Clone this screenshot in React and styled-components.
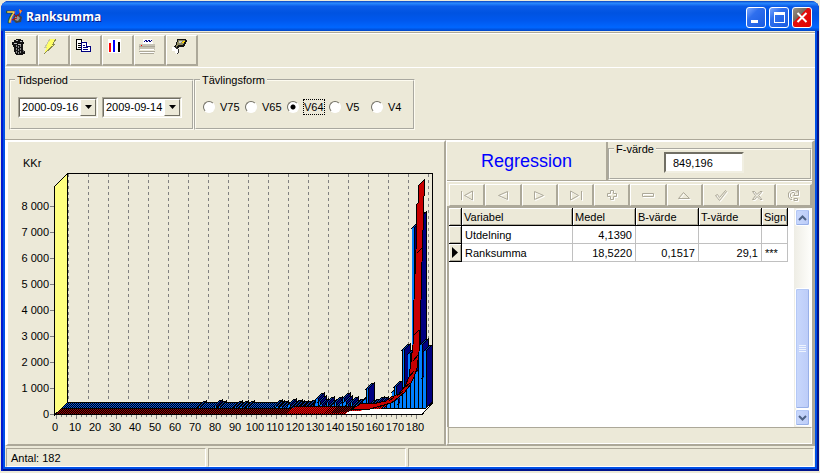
/* eslint-disable react/prop-types */
import { useState } from "react";
import styled, { createGlobalStyle, css } from "styled-components";

const face = "#ece9d8";
const shade = "#aca899";

const GlobalStyle = createGlobalStyle`
  *, *::before, *::after {
    box-sizing: border-box;
  }

  body {
    margin: 0;
    background: ${face};
    color: #000;
    font-family: "Liberation Sans", Arial, sans-serif;
    font-size: 11px;
    line-height: 14px;
  }

  button, input, select {
    font: inherit;
    color: inherit;
    margin: 0;
  }
`;

const raised = css`
  border: 1px solid;
  border-color: #fff ${shade} ${shade} #fff;
`;

const sunken = css`
  border: 1px solid;
  border-color: ${shade} #fff #fff ${shade};
`;

const Window = styled.div`
  display: flow-root;
`;

const Frame = styled.div`
  min-height: calc(100vh - 3px);
  margin: 1px 1px 2px;
  padding: 0 4px 4px;
  display: flex;
  flex-direction: column;
  border-radius: 8px 8px 0 0;
  background: #0050e6;
  box-shadow: inset 2px 0 0 #0019cf, inset -2px -2px 0 #00138c;
`;

const TitleBar = styled.header`
  height: 30px;
  margin: 0 -4px;
  padding: 2px 7px 0 5px;
  display: flex;
  align-items: center;
  gap: 3px;
  border-radius: 8px 8px 0 0;
  background: linear-gradient(
    180deg,
    #0842c0 0%,
    #2a8bff 7%,
    #0a5be8 18%,
    #0053e1 40%,
    #0058ee 65%,
    #0066ff 88%,
    #0045c8 100%
  );
`;

const Title = styled.h1`
  flex: 1;
  margin: 0;
  color: #fff;
  font-family: "Open Sans", "Noto Sans", sans-serif;
  font-size: 12px;
  line-height: 20px;
  font-weight: 700;
  text-shadow: 1px 1px 0 #0a1883;
`;

const CaptionButton = styled.button`
  width: 20px;
  height: 21px;
  padding: 0;
  border: 1px solid #fff;
  border-radius: 3px;
  background: ${({ $close }) =>
    $close
      ? "linear-gradient(135deg, #9a9488 0%, #77685c 38%, #e01010 40%, #e40000 100%)"
      : "linear-gradient(135deg, #7ba7ff 0%, #2f6fee 35%, #1a5be0 100%)"};

  svg {
    display: block;
  }
`;

const Client = styled.div`
  flex: 1;
  display: flex;
  flex-direction: column;
  background: ${face};
`;

const Toolbar = styled.div`
  height: 37px;
  padding: 3px 1px 0;
  display: flex;
  border-bottom: 1px solid #fff;
  box-shadow: inset 0 1px 0 ${face}, inset 0 2px 0 ${shade}, inset 0 3px 0 #fff;
`;

const ToolButton = styled.button`
  ${raised}
  width: 32px;
  height: 31px;
  margin-top: 1px;
  padding: 3px 4px;
  display: flex;
  align-items: flex-start;
  border-right-width: 2px;
  border-bottom-width: 2px;
  background: ${face};
`;

const Filters = styled.form`
  height: 72px;
  padding: 5px 4px 0;
  display: flex;
  align-items: flex-start;
  border-bottom: 1px solid ${shade};
`;

const Group = styled.fieldset`
  min-width: 0;
  width: ${({ $width }) => $width}px;
  height: 57px;
  margin: 0;
  padding: 0;
  border: 2px groove #fdfbf0;
`;

const Legend = styled.legend`
  margin-left: 4px;
  padding: 0 2px;
`;

const GroupRow = styled.div`
  height: 40px;
  padding-left: 7px;
  display: flex;
  align-items: center;
`;

const DateBox = styled.div`
  position: relative;
  width: 80px;
  height: 21px;
  margin-right: 4px;
  border: 1px solid;
  border-color: ${shade} #fff #fff ${shade};
`;

const DateSelect = styled.select`
  width: 100%;
  height: 100%;
  padding: 0 0 0 2px;
  appearance: none;
  border: 1px solid;
  border-color: #716f64 #f1efe2 #f1efe2 #716f64;
  border-radius: 0;
  background: #fff;
`;

const DropArrow = styled.span`
  ${raised}
  position: absolute;
  top: 1px;
  right: 1px;
  bottom: 1px;
  width: 16px;
  display: flex;
  align-items: center;
  justify-content: center;
  border-color: #fff #716f64 #716f64 #fff;
  background: ${face};
  pointer-events: none;
`;

const RadioLabel = styled.label`
  width: 42px;
  display: flex;
  align-items: center;
  gap: 5px;
  white-space: nowrap;
`;

const Radio = styled.input`
  flex: none;
  width: 12px;
  height: 12px;
  appearance: none;
  border: 1px solid;
  border-color: #716f64 #fff #fff #716f64;
  border-radius: 50%;
  background: #fff;
  outline: none;

  &:checked {
    background: radial-gradient(circle, #000 0 2px, #fff 3px);
  }
`;

const RadioText = styled.span`
  outline: ${({ $focused }) => ($focused ? "1px dotted #000" : "none")};
`;

const Main = styled.main`
  flex: 1;
  display: grid;
  grid-template-columns: 441fr 369fr;
`;

const ChartPanel = styled.section`
  min-width: 0;
  border: solid;
  border-width: 2px 2px 2px 3px;
  border-color: #fff ${shade} ${shade} #fff;

  svg {
    display: block;
    width: 100%;
  }
`;

const ResultPanel = styled.section`
  min-width: 0;
  display: flex;
  flex-direction: column;
  border: solid;
  border-width: 2px 3px 2px 1px;
  border-color: #fff ${shade} ${shade} #fff;
`;

const ResultHead = styled.div`
  height: 39px;
  display: flex;
  border-bottom: 1px solid ${shade};
`;

const RegressionButton = styled.button`
  flex: none;
  width: 161px;
  padding: 0;
  border: 0;
  border-right: 2px solid ${shade};
  background: ${face};
  color: #0000ff;
  font-size: 18px;
  line-height: 22px;
`;

const ValueGroup = styled(Group)`
  flex: 1;
  height: 38px;
`;

const ValueInput = styled.input`
  display: block;
  width: 80px;
  height: 21px;
  margin: -4px 0 0 54px;
  padding: 0 7px;
  border: 2px solid;
  border-color: #716f64 #f1efe2 #f1efe2 #716f64;
  border-radius: 0;
  background: #fff;
`;

const Navigator = styled.div`
  height: 25px;
  padding: 2px 0 0 2px;
  display: flex;
  border-top: 1px solid #fff;
`;

const NavButton = styled.button`
  ${raised}
  flex: 1;
  min-width: 0;
  padding: 0;
  display: flex;
  align-items: center;
  justify-content: center;
  border-right-width: 2px;
  background: ${face};

  svg {
    fill: none;
    stroke: ${shade};
    filter: drop-shadow(1px 1px 0 #fff);
  }
`;

const GridPane = styled.div`
  flex: 1;
  display: flex;
  justify-content: space-between;
  border: solid ${shade};
  border-width: 2px 0 0 2px;
  background: #fff;
`;

const Grid = styled.table`
  width: 339px;
  height: 54px;
  table-layout: fixed;
  border-collapse: separate;
  border-spacing: 0;
`;

const HeadCell = styled.th`
  width: ${({ $width }) => $width}px;
  height: 18px;
  padding: 1px 0 0 2px;
  overflow: hidden;
  border: solid #000;
  border-width: 0 1px 1px 0;
  background: ${face};
  box-shadow: inset 1px 1px 0 #fff, inset -1px -1px 0 ${shade};
  font-weight: 400;
  text-align: left;
`;

const Cell = styled.td`
  height: 18px;
  padding: 1px 3px 0;
  border: solid #c0c0c0;
  border-width: 0 1px 1px 0;
  text-align: ${({ $right }) => ($right ? "right" : "left")};
`;

const Marker = styled.th`
  height: 18px;
  padding: 0 0 0 3px;
  border: solid #000;
  border-width: 0 1px 1px 0;
  background: ${face};
  box-shadow: inset 1px 1px 0 #fff, inset -1px -1px 0 ${shade};

  svg {
    display: block;
  }
`;

const ScrollBar = styled.div`
  width: 18px;
  padding: 1px;
  display: flex;
  flex-direction: column;
  background: linear-gradient(90deg, #eeede5, #fefefb);
  border-right: 1px solid #fff;
`;

const scrollPart = css`
  border: 1px solid #fff;
  border-radius: 2px;
  background: linear-gradient(90deg, #c9d8fc, #bcccf8);
  box-shadow: inset -1px -1px 0 #98b0e8, inset 1px 1px 0 #b4c8f6;
`;

const ScrollButton = styled.button`
  ${scrollPart}
  height: 17px;
  padding: 0;
  display: flex;
  align-items: center;
  justify-content: center;
`;

const Track = styled.div`
  flex: 1;
  display: flex;
  flex-direction: column;
  justify-content: flex-end;
`;

const Thumb = styled.div`
  ${scrollPart}
  height: 66%;
  display: flex;
  align-items: center;
  justify-content: center;
`;

const ResultFooter = styled.div`
  ${sunken}
  height: 17px;
  margin-left: 1px;
`;

const StatusBar = styled.footer`
  height: 21px;
  padding: 2px 1px 0;
  display: flex;
  gap: 2px;
`;

const StatusCell = styled.div`
  ${sunken}
  flex: ${({ $width }) => ($width ? `0 0 ${$width}px` : "1")};
  padding: 2px 4px 0;
`;

/* ---------- toolbar drawings ---------- */

const toolIcons = {
  Rensa: (
    <>
      <path d="M3 1h2V0h5v1h2v2h1v2h-1v6l2 2v2h-2v1H5v-1H4v-2H3V8H2V6H1V3h2z" fill="#111" />
      <path d="M5 1h2v1H5zM9 2h2v1H9zM3 4h3v1H3zM7 5h3v1H7z" fill="#bbb" />
      <path d="M5.500 6v8M7.500 7v8M9.500 6v8" stroke="#8c8c8c" strokeDasharray="2 1" />
      <path d="M12 11h1v2h-1z" fill="#666" />
    </>
  ),
  Kör: (
    <>
      <path d="M7 0h6l-3 5h2L1 15l3-7H2z" fill="#ffff66" />
      <path d="M13 0l-3 5h2L1 15" fill="none" stroke="#8a8a50" />
      <path d="M7 0L2 8h2" fill="none" stroke="#c8c8a0" />
    </>
  ),
  Kopiera: (
    <g fill="#fff" stroke="#000">
      <path d="M1.500 .5h5l3 3v7h-8z" />
      <path d="M6.500 .5v3h3M3 4.500h3M3 6.500h4M3 8.500h4" />
      <g stroke="#000080">
        <path d="M6.500 3.500h5l4 4v5h-9z" />
        <path d="M11.500 3.500v4h4M8 6.500h2M8 8.500h5M8 10.500h5" />
      </g>
    </g>
  ),
  Diagram: (
    <>
      <path d="M1 0h13v14H1z" fill="#fff" />
      <path d="M2 4h2v9H2z" fill="#ff0000" />
      <path d="M6 1h2v12H6z" fill="#0000ff" />
      <path d="M11 3h2v10h-2z" fill="#000" />
    </>
  ),
  "Skriv ut": (
    <>
      <path d="M4 0h9l1 5H4z" fill="#fff" />
      <path d="M5 2.500l2-1 1 1 2-1 1 1 2-1" fill="none" stroke="#000080" />
      <path d="M0 5h16v6H0z" fill="#c6c3b4" />
      <path d="M0 7.500h16M0 12.500h16M1 14.500h14" stroke={shade} />
      <path d="M1 10.500h14M1 13.500h14" stroke="#fff" />
      <path d="M2 6h1v1H2z" fill="#f00" />
    </>
  ),
  Sök: (
    <>
      <path d="M6 0h9l1 2-3 6H9l-4 3H2L1 9l4-3z" fill="#111" />
      <path d="M7 1h7l-2 5H8L5 8z" fill="#8d8a60" />
      <path d="M8 2h3l-1 2H8z" fill="#ccc" />
      <path d="M12 2h2l-1 2h-2z" fill="#ffd800" />
      <path d="M1 8h3l3 2 1 3-2 2H5l-1-3H1z" fill="#fff" />
      <path d="M4 8l3 2 1 3-2 2" fill="none" stroke="#333" />
    </>
  ),
};

/* ---------- record navigator drawings ---------- */

const navIcons = {
  Första: "M1.500 2v9M12.500 2v9l-8-4.500z",
  Föregående: "M11.500 2.500v8l-9-4z",
  Nästa: "M2.500 2.500v8l9-4z",
  Sista: "M1.500 2v9l8-4.500zM12.500 2v9",
  "Lägg till": "M5.500 1.500h3v3h3v3h-3v3h-3v-3h-3v-3h3z",
  "Ta bort": "M1.500 4.500h11v3h-11z",
  Redigera: "M1.500 9.500l5-6 6 6z",
  Spara: "M1.500 6.500l2-1 2 3 6-7 1 1-7 9z",
  Avbryt: "M2.500 2.500h2l2.500 3 3-3h2l-3.500 4 3.500 4h-2l-3-3-2.500 3h-2l3-4z",
  Uppdatera: "M6 10.500H4.500L2.500 8V4L5 1.500h4l2 2V1.500h1.500v5h-5L9 5 8 3.500H6L4.500 5v2.500L6 9M8 9.500h3.500v2H8z",
};

/* ---------- chart ---------- */

const BAR = 2;
const DEPTH = 6;
const BAR_LEFT = 60;
const BAR_BASE = 408;

// bar number -> height, all others are flat
const heights = {
  69: 1, 77: 2, 79: 1, 87: 1, 90: 1, 93: 1,
  107: 2, 108: 1, 110: 1, 114: 3, 115: 1, 117: 2, 118: 1, 120: 1, 122: 1, 124: 2, 125: 1,
  127: 4, 128: 9, 129: 6, 130: 3, 133: 5, 134: 2, 136: 3, 137: 5, 138: 2, 140: 4, 141: 9, 142: 6, 143: 3,
  145: 5, 146: 2, 148: 3, 149: 1, 150: 3, 151: 7, 152: 8, 153: 19, 154: 2, 156: 3, 157: 2, 158: 5, 160: 5,
  161: 2, 163: 5, 164: 8, 165: 10, 166: 16, 167: 21, 168: 8, 169: 4, 170: 16, 171: 58,
  172: 19, 173: 24, 174: 54, 175: 28, 176: 180, 177: 44, 178: 36, 179: 190, 180: 63, 181: 30, 182: 57,
};

const bars = Array.from({ length: 183 }, (_, i) => ({
  x: BAR_LEFT + i * BAR,
  h: heights[i] || 0,
})).filter((bar) => bar.h > 0);

const ribbon =
  "M418 186L424 180V196L423 197V230L422 262L421 300L420 330L419 352L417 368L414 377L410 385L405 392L398 398L391 403L384 405L370 409H352L360 404L377 403L386 401L391 397L399 394L405 386L409 377L411 362L413 345L414 300L416 250L417 204L418 203Z";

function Bar({ x, h }) {
  const top = BAR_BASE - h;
  const right = x + BAR;
  return (
    <g>
      <path
        d={`M${right} ${BAR_BASE}V${top}l${DEPTH} ${-DEPTH}V${BAR_BASE - DEPTH}z`}
        fill="#000080"
        stroke="#000"
      />
      <path
        d={`M${x} ${top}l${DEPTH} ${-DEPTH}h${BAR}l${-DEPTH} ${DEPTH}z`}
        fill="#0040c0"
        stroke="#000"
      />
      <path d={`M${x} ${top}h${BAR}V${BAR_BASE}h${-BAR}z`} fill="#0080ff" />
      {x % 4 === 2 && <path d={`M${x} ${top}h1V${BAR_BASE}h-1z`} />}
    </g>
  );
}

function Chart() {
  const ticks = Array.from({ length: 19 }, (_, i) => i);
  return (
    <svg viewBox="8 142 436 302" role="img" aria-label="KKr per ranksumma" fontSize="11">
      <defs>
        <pattern id="blueMesh" width="2" height="2" patternUnits="userSpaceOnUse">
          <path d="M0 0h2v2H0z" fill="#000" />
          <path d="M0 0h1v1H0zM1 1h1v1H1z" fill="#0050e0" />
        </pattern>
        <pattern id="redMesh" width="2" height="2" patternUnits="userSpaceOnUse">
          <path d="M0 0h2v2H0z" fill="#000" />
          <path d="M0 0h1v1H0zM1 1h1v1H1z" fill="#f00" />
        </pattern>
      </defs>

      <text x="23" y="167">KKr</text>
      {ticks.slice(0, 9).map((n) => (
        <text key={n} x="49" y={418 - n * 26} textAnchor="end">
          {n ? `${n} 000` : "0"}
        </text>
      ))}
      {ticks.map((n) => (
        <text key={n} x={55 + n * 20} y="431" textAnchor="middle">
          {n * 10}
        </text>
      ))}

      <g shapeRendering="crispEdges">
        {ticks.map((n) => (
          <path
            key={n}
            d={`M${68.5 + n * 20} 174V403`}
            stroke="#808080"
            strokeDasharray="3 3"
          />
        ))}
        {ticks.slice(0, 9).map((n) => (
          <path key={n} d={`M50 ${414.5 - n * 26}h4`} stroke="#808080" />
        ))}
        {Array.from({ length: 73 }, (_, i) => (
          <path key={i} d={`M${56.5 + i * 5} 415v${i % 4 ? 2 : 4}`} stroke="#808080" />
        ))}

        <path d="M54.500 186.500L67.500 173.500V403L55 414.500z" fill="#ffff80" stroke="#000" />
        <path d="M67 173.500H432.500V403.500L421 414.500" fill="none" stroke="#000" />

        <path d="M57 414L67 403H432L421 414z" fill="#fff" />
        <path d="M61 408L67 402H431L425 408z" fill="url(#blueMesh)" />
        <path d="M67 402.500H400M62 408.500H426" stroke="#000" />
        {bars.map((bar) => (
          <Bar key={bar.x} {...bar} />
        ))}

        <path d="M56 414L61 409H288L296 407H372L384 403L388 405L380 409H366L350 414z" fill="url(#redMesh)" />
        <path d="M56 414L61 409H292L286 414z" fill="#000" fillOpacity="0.4" />
        <path d="M61 408.500H290L294 406.500H358" fill="none" stroke="#000" />
        <path d="M288 413L294 407H330L324 413zM352 411L358 406H384L376 410z" fill="#d00000" fillOpacity="0.45" />
        <path d="M330 413L336 407H356L350 412z" fill="#000" fillOpacity="0.5" />
        <path d="M345 414L350 411H361L364 409H427L421 414z" fill="#fff" />
        <path d="M55 414.500H422L432 403.500" fill="none" stroke="#000" />
        <path d={ribbon} fill="#c80000" stroke="#000" />
        <path d="M417 253l5-5M414 335l5-5M413 361l5-6M409 377l5-6M404 388l6-5M397 396l6-5M389 401l5-4" stroke="#000" />
      </g>
    </svg>
  );
}

const columns = [
  { title: "Variabel", width: 111 },
  { title: "Medel", width: 63 },
  { title: "B-värde", width: 63 },
  { title: "T-värde", width: 63 },
  { title: "Sign", width: 26 },
];

const rows = [
  ["Utdelning", "4,1390", "", "", ""],
  ["Ranksumma", "18,5220", "0,1517", "29,1", "***"],
];

function DatePick({ label, value }) {
  return (
    <DateBox>
      <DateSelect aria-label={label} defaultValue={value}>
        <option>{value}</option>
      </DateSelect>
      <DropArrow>
        <svg width="7" height="4">
          <path d="M0 0h7L3.500 4z" />
        </svg>
      </DropArrow>
    </DateBox>
  );
}

function Chevron({ down }) {
  return (
    <svg width="9" height="6" fill="none" stroke="#4d6185" strokeWidth="2">
      <path d={down ? "M1 1l3.500 3.500L8 1" : "M1 5l3.500-3.500L8 5"} />
    </svg>
  );
}

function App() {
  const [form, setForm] = useState("V64");

  return (
    <Window>
      <GlobalStyle />
      <Frame>
        <TitleBar>
          <svg width="17" height="18">
            <path d="M8 8l4-2 4 3-1 5-5 1-3-3z" fill="#444" />
            <path d="M9 9l3-1 2 2-2 3-3-1z" fill="#999" />
            <path d="M8 6l3 3M12 8l4-6M6 12l5-2" stroke="#c00000" strokeWidth="1" />
            <path d="M13 1l3 2-2 3z" fill="#ff9a2e" />
            <text x="0" y="15" fontSize="17" fontWeight="700" fill="#ffe060" stroke="#402000" strokeWidth="0.5">
              7
            </text>
          </svg>
          <Title>Ranksumma</Title>
          <CaptionButton aria-label="Minimera">
            <svg width="18" height="19">
              <path d="M4 12h7v3H4z" fill="#fff" />
            </svg>
          </CaptionButton>
          <CaptionButton aria-label="Maximera">
            <svg width="18" height="19">
              <path d="M4 4h11v11H4zM5 7v7h9V7z" fill="#fff" fillRule="evenodd" />
            </svg>
          </CaptionButton>
          <CaptionButton aria-label="Stäng" $close>
            <svg width="18" height="19">
              <path d="M4.500 5l9 9M13.500 5l-9 9" stroke="#fff" strokeWidth="2" />
            </svg>
          </CaptionButton>
        </TitleBar>

        <Client>
          <Toolbar>
            {Object.entries(toolIcons).map(([name, drawing]) => (
              <ToolButton key={name} aria-label={name}>
                <svg width="17" height="17" shapeRendering="crispEdges">
                  {drawing}
                </svg>
              </ToolButton>
            ))}
          </Toolbar>

          <Filters>
            <Group $width={185}>
              <Legend>Tidsperiod</Legend>
              <GroupRow>
                <DatePick label="Från" value="2000-09-16" />
                <DatePick label="Till" value="2009-09-14" />
              </GroupRow>
            </Group>
            <Group $width={221}>
              <Legend>Tävlingsform</Legend>
              <GroupRow>
                {["V75", "V65", "V64", "V5", "V4"].map((name) => (
                  <RadioLabel key={name}>
                    <Radio
                      type="radio"
                      name="form"
                      checked={form === name}
                      onChange={() => setForm(name)}
                    />
                    <RadioText $focused={form === name}>{name}</RadioText>
                  </RadioLabel>
                ))}
              </GroupRow>
            </Group>
          </Filters>

          <Main>
            <ChartPanel>
              <Chart />
            </ChartPanel>

            <ResultPanel>
              <ResultHead>
                <RegressionButton>Regression</RegressionButton>
                <ValueGroup>
                  <Legend>F-värde</Legend>
                  <ValueInput aria-label="F-värde" defaultValue="849,196" />
                </ValueGroup>
              </ResultHead>

              <Navigator>
                {Object.entries(navIcons).map(([name, d]) => (
                  <NavButton key={name} aria-label={name} disabled>
                    <svg width="14" height="13">
                      <path d={d} />
                    </svg>
                  </NavButton>
                ))}
              </Navigator>

              <GridPane>
                <Grid>
                  <thead>
                    <tr>
                      <HeadCell $width={13} aria-label="Rad" />
                      {columns.map((col) => (
                        <HeadCell key={col.title} $width={col.width}>
                          {col.title}
                        </HeadCell>
                      ))}
                    </tr>
                  </thead>
                  <tbody>
                    {rows.map((row, i) => (
                      <tr key={row[0]}>
                        <Marker>
                          {i === 1 && (
                            <svg width="7" height="11">
                              <path d="M0 0l6 5.500L0 11z" />
                            </svg>
                          )}
                        </Marker>
                        {row.map((value, n) => (
                          <Cell key={n} $right={n > 0 && n < 4}>
                            {value}
                          </Cell>
                        ))}
                      </tr>
                    ))}
                  </tbody>
                </Grid>
                <ScrollBar>
                  <ScrollButton aria-label="Upp">
                    <Chevron />
                  </ScrollButton>
                  <Track>
                    <Thumb>
                      <svg width="7" height="8">
                        <path d="M0 .5h7M0 2.500h7M0 4.500h7M0 6.500h7" stroke="#eef4fe" />
                      </svg>
                    </Thumb>
                  </Track>
                  <ScrollButton aria-label="Ned">
                    <Chevron down />
                  </ScrollButton>
                </ScrollBar>
              </GridPane>
              <ResultFooter />
            </ResultPanel>
          </Main>

          <StatusBar>
            <StatusCell $width={200}>Antal: 182</StatusCell>
            <StatusCell $width={198}></StatusCell>
            <StatusCell />
          </StatusBar>
        </Client>
      </Frame>
    </Window>
  );
}

export default App;
